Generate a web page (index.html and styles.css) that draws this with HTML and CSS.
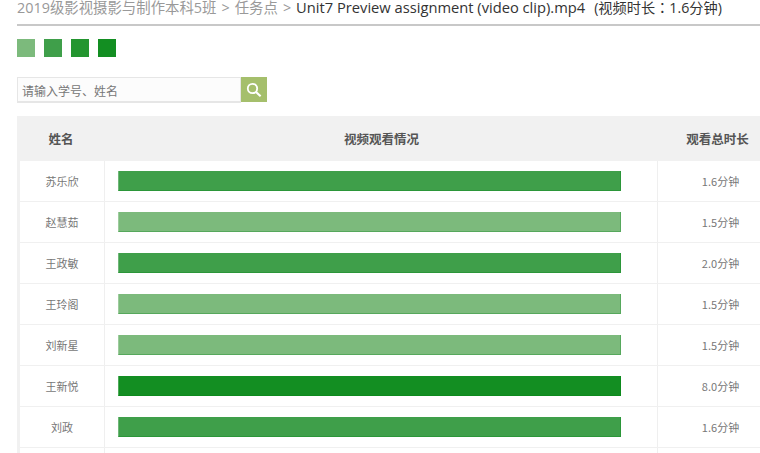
FILE: index.html
```html
<!DOCTYPE html>
<html lang="zh">
<head>
<meta charset="utf-8">
<title>视频观看情况</title>
<link rel="stylesheet" href="styles.css">
</head>
<body>
<div class="page">
  <div class="crumb"><span class="muted">2019级影视摄影与制作本科5班</span><span class="sep">&gt;</span><span class="muted">任务点</span><span class="sep">&gt;</span><span class="cur">Unit7 Preview assignment (video clip).mp4</span><span class="dur">(视频时长<span class="colon" lang="zh-TW">：</span>1.6分钟)</span></div>
  <div class="legend">
    <i class="sq l1"></i><i class="sq l2"></i><i class="sq l3"></i><i class="sq l4"></i>
  </div>
  <div class="search">
    <input class="search-input" type="text" placeholder="请输入学号、姓名">
    <button class="search-btn" type="button" aria-label="搜索">
      <svg width="16" height="16" viewBox="0 0 16 16" fill="none" stroke="#fff"><circle cx="6.5" cy="6.5" r="4.7" stroke-width="1.8"/><path d="M10 10l4.6 4.2" stroke-width="2.2"/></svg>
    </button>
  </div>
  <div class="table">
    <div class="row head">
      <div class="c-name">姓名</div><div class="c-bar">视频观看情况</div><div class="c-time">观看总时长</div>
    </div>
    <div class="row"><div class="c-name">苏乐欣</div><div class="c-bar"><div class="bar l2"></div></div><div class="c-time">1.6分钟</div></div>
    <div class="row"><div class="c-name">赵慧茹</div><div class="c-bar"><div class="bar l1"></div></div><div class="c-time">1.5分钟</div></div>
    <div class="row"><div class="c-name">王政敏</div><div class="c-bar"><div class="bar l2"></div></div><div class="c-time">2.0分钟</div></div>
    <div class="row"><div class="c-name">王玲阁</div><div class="c-bar"><div class="bar l1"></div></div><div class="c-time">1.5分钟</div></div>
    <div class="row"><div class="c-name">刘新星</div><div class="c-bar"><div class="bar l1"></div></div><div class="c-time">1.5分钟</div></div>
    <div class="row"><div class="c-name">王新悦</div><div class="c-bar"><div class="bar l4"></div></div><div class="c-time">8.0分钟</div></div>
    <div class="row"><div class="c-name">刘政</div><div class="c-bar"><div class="bar l2"></div></div><div class="c-time">1.6分钟</div></div>
    <div class="row"><div class="c-name"></div><div class="c-bar"></div><div class="c-time"></div></div>
  </div>
</div>
</body>
</html>
```
FILE: styles.css
```css
html, body { margin: 0; padding: 0; background: #fff; overflow: hidden; height: 453px; }
body { font-family: "Liberation Sans", "Noto Sans CJK SC", sans-serif; color: #555; }
.page { width: 766px; margin-left: 17px; }
.crumb { height: 24px; border-bottom: 2px solid #c8c8c8; font-size: 14.4px; line-height: 15px; white-space: nowrap; font-family: "Open Sans", "Noto Sans CJK SC", sans-serif; }
.muted { color: #999; }
.sep { color: #999; margin: 0 5px; }
.cur { color: #333; font-size: 14.7px; }
.dur { color: #333; font-size: 14.2px; margin-left: 9px; }
.colon { font-family: "Noto Sans CJK TC", sans-serif; }
.legend { display: flex; gap: 9px; margin-top: 13px; }
.sq { display: block; width: 18px; height: 18px; }
.l1 { background: #7cba7c; }
.l2 { background: #3f9f4a; }
.l3 { background: #23952f; }
.l4 { background: #138e22; }
.search { display: flex; margin-top: 20px; width: 250px; height: 26px; }
.search-input { box-sizing: border-box; width: 224px; height: 26px; margin: 0; padding: 2px 4px 0; border: 1px solid #e6e6e6; border-bottom-width: 2px; background: #fcfcfc; font: 12px "Noto Sans CJK SC", sans-serif; outline: none; }
.search-input::placeholder { color: #777; opacity: 1; }
.search-btn { width: 26px; height: 25px; padding: 0; border: 0; background: #a5bf6c; display: flex; align-items: center; justify-content: center; }
.table { margin-top: 13px; border-left: 3px solid #f1f1f1; font-size: 11px; font-family: "Noto Sans CJK SC", sans-serif; color: #777; }
.row { display: grid; grid-template-columns: 85px 553px 125px; height: 40px; border-bottom: 1px solid #f0f0f0; align-items: stretch; }
.row > div { display: flex; align-items: center; justify-content: center; }
.c-name, .c-bar { border-right: 1px solid #efefef; }
.row .c-bar { padding: 0 36px 0 13px; justify-content: flex-start; }
.bar { width: 503px; height: 20px; flex: none; box-sizing: border-box; border-left: 1px solid rgba(255,255,255,.25); border-right: 1px solid rgba(0,130,20,.3); border-bottom: 1px solid rgba(0,130,20,.3); }
.head { height: 45px; background: #f1f1f1; border-bottom: 0; font-weight: 700; font-size: 12.5px; color: #555; }
.head .c-name, .head .c-bar { border-right: 0; }
.head .c-name { padding-right: 3px; }
.row.head .c-bar { justify-content: center; padding: 0; }
.head .c-time { padding-right: 6px; }
```
